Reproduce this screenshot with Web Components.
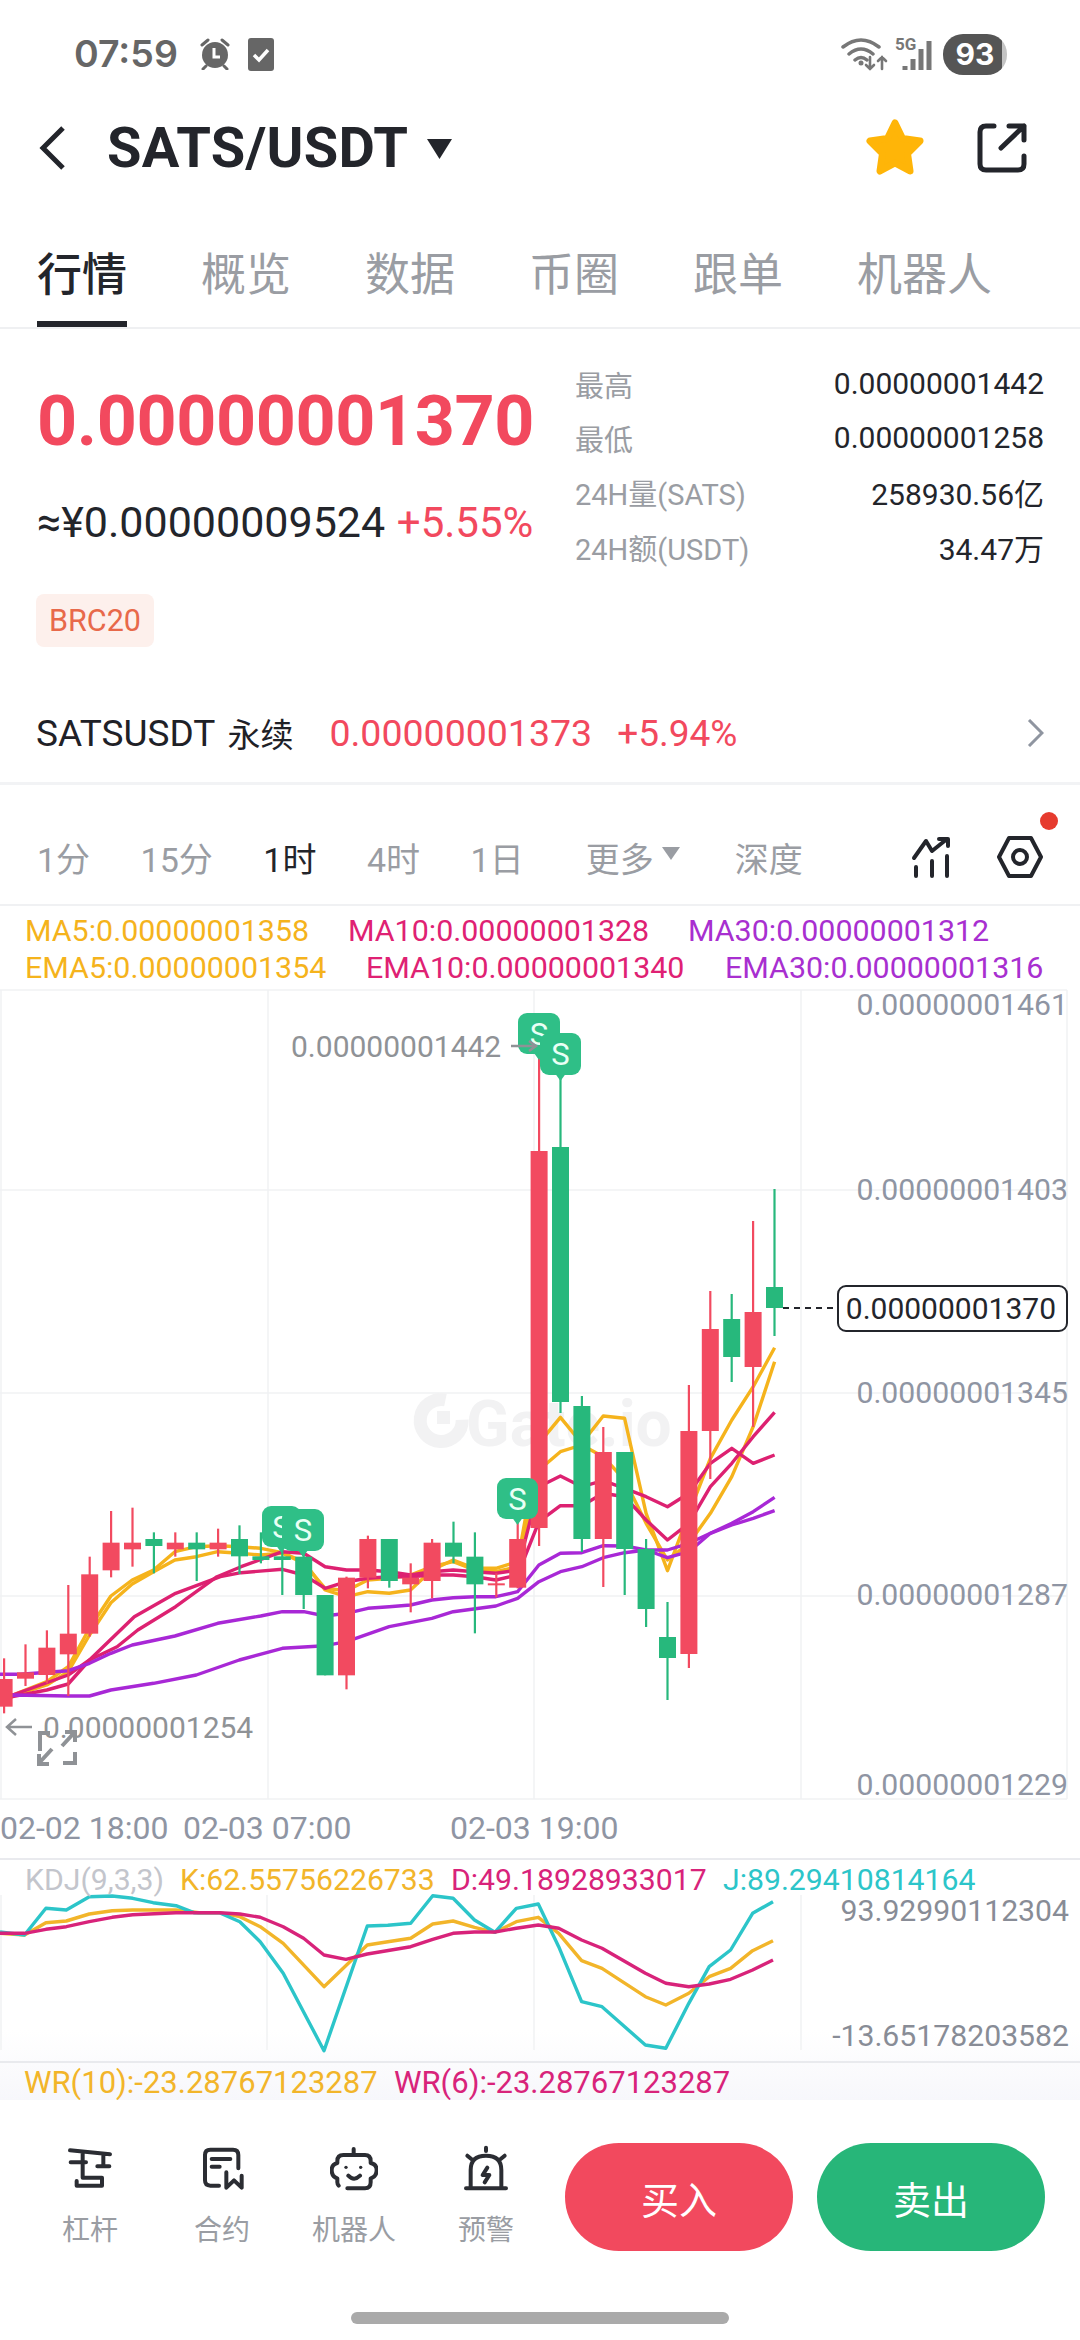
<!DOCTYPE html>
<html lang="zh">
<head>
<meta charset="utf-8">
<title>SATS/USDT</title>
<style>
  html, body { margin: 0; padding: 0; background: #fff; }
  body {
    width: 1080px; height: 2340px; overflow: hidden;
    font-family: Roboto, "Noto Sans CJK SC", sans-serif;
    color: #1f2127;
  }
</style>
</head>
<body>
  <status-bar></status-bar>
  <pair-header>SATS/USDT</pair-header>
  <market-tabs>
    <market-tab active>行情</market-tab>
    <market-tab>概览</market-tab>
    <market-tab>数据</market-tab>
    <market-tab>币圈</market-tab>
    <market-tab>跟单</market-tab>
    <market-tab>机器人</market-tab>
  </market-tabs>
  <price-panel>
    <stat-row label="最高">0.00000001442</stat-row>
    <stat-row label="最低">0.00000001258</stat-row>
    <stat-row label="24H量(SATS)">258930.56亿</stat-row>
    <stat-row label="24H额(USDT)">34.47万</stat-row>
  </price-panel>
  <period-bar></period-bar>
  <ma-legend></ma-legend>
  <kline-chart></kline-chart>
  <kdj-panel></kdj-panel>
  <action-bar>
    <action-item label="杠杆">
      <svg viewBox="48 30 144 144" width="48" height="48" fill="none" stroke="#2b2d33" stroke-width="12" stroke-linecap="round" stroke-linejoin="round"><path d="M60 46 180 58M98 50V128H156V152H80V138M62 82H108M160 56V94M142 94H178"/></svg>
    </action-item>
    <action-item label="合约">
      <svg viewBox="441 30 144 144" width="48" height="48" fill="none" stroke="#2b2d33" stroke-width="12" stroke-linecap="round" stroke-linejoin="round"><path d="M504 152H478Q462 152 462 136V60Q462 44 478 44H546Q562 44 562 60V100M482 72H538M482 95H506M526 112V158L549 136 572 158V122"/></svg>
    </action-item>
    <action-item label="机器人">
      <svg viewBox="840 30 144 144" width="48" height="48" fill="none" stroke="#2b2d33" stroke-width="12" stroke-linecap="round" stroke-linejoin="round"><path d="M911 42V58M892 160H945Q962 160 962 142V130Q980 125 980 105 980 88 962 84V78Q962 60 945 60H880Q862 60 862 78V84Q845 88 845 105 845 125 862 130V142Q862 148 866 152M895 122Q912 140 930 122"/><circle cx="888" cy="97" r="5" fill="#2b2d33" stroke="none"/><circle cx="932" cy="97" r="5" fill="#2b2d33" stroke="none"/></svg>
    </action-item>
    <action-item label="预警">
      <svg viewBox="1236 30 144 144" width="48" height="48" fill="none" stroke="#2b2d33" stroke-width="12" stroke-linecap="round" stroke-linejoin="round"><path d="M1262 158V105Q1262 62 1308 62 1354 62 1354 105V158M1248 160H1368M1308 38V48M1252 62 1264 72M1364 62 1352 72M1312 98 1298 120H1318L1304 142"/></svg>
    </action-item>
    <trade-button slot="trade" color="#f2495e">买入</trade-button>
    <trade-button slot="trade" color="#27b679">卖出</trade-button>
  </action-bar>
  <home-indicator></home-indicator>

<script>
/****************************
 * Small helper for the shadow roots
 ****************************/
class ShadowBase extends HTMLElement {
  constructor(html) {
    super();
    this.attachShadow({ mode: 'open' });
    this.shadowRoot.innerHTML = html;
  }
}

class StatusBar extends ShadowBase {
  constructor() {
    super(`
      <style>
        :host { display: flex; align-items: center; height: 108px; padding: 0 73px 0 74px; box-sizing: border-box; color: #666; }
        .time { font: 600 37.500px/1 Inter, Roboto, sans-serif; }
        svg { display: block; }
        .alarm { margin-left: 22px; }
        .check { margin-left: 18px; }
        .fill { flex: 1; }
        .bat { display: flex; align-items: center; justify-content: center; margin-left: 10px; width: 64px; height: 41px; border-radius: 20px; color: #fff; font: 700 30px/1 Inter, Roboto, sans-serif; background: linear-gradient(90deg, #555 92%, #c4c4c4 92%); }
      </style>
      <span class="time">07:59</span>
      <svg class="alarm" width="30" height="32" viewBox="0 0 30 32">
        <circle cx="15" cy="17" r="13" fill="#666"/>
        <path d="M2 7 8 2M28 7 22 2M6 28 3 31M24 28 27 31" stroke="#666" stroke-width="3" stroke-linecap="round"/>
        <path d="M14 10V19H20" fill="none" stroke="#fff" stroke-width="3"/>
      </svg>
      <svg class="check" width="26" height="33" viewBox="0 0 26 33">
        <rect width="26" height="33" rx="3" fill="#666"/>
        <path d="M6 17 11 22 20 12" fill="none" stroke="#fff" stroke-width="3.5"/>
      </svg>
      <span class="fill"></span>
      <svg width="92" height="52" viewBox="0 -8 92 52">
        <g fill="none" stroke="#777" stroke-width="3.500" stroke-linecap="round">
          <path d="M2 11Q20 -3 38 11M8 18Q20 8 32 18M14 24Q20 19 26 24"/>
          <path d="M29 21V33M25 29 29 33 33 29M41 33V21M37 25 41 21 45 25" stroke-width="2.600"/>
          <path d="M64 34V30M72 34V23M80 34V13M88 34V5" stroke-width="5" stroke-linecap="butt"/>
        </g>
        <circle cx="20" cy="27" r="2.500" fill="#777"/>
        <text x="54" y="14" font-family="Roboto" font-weight="700" font-size="17" fill="#777">5G</text>
      </svg>
      <span class="bat">93</span>
    `);
  }
}
customElements.define('status-bar', StatusBar);

class PairHeader extends ShadowBase {
  constructor() {
    super(`
      <style>
        :host { display: flex; align-items: center; height: 80px; padding: 0 53px 0 39px; box-sizing: border-box; }
        .name { font-size: 56px; font-weight: 700; margin-left: 41px; color: #23252b; letter-spacing: .25px; }
        .caret { margin-left: 19px; margin-top: 2px; }
        .fill { flex: 1; }
        svg { display: block; }
        .share { margin-left: 52px; }
      </style>
      <svg width="27" height="44" viewBox="0 0 27 44"><path d="M24 2 4 22 24 42" fill="none" stroke="#23252b" stroke-width="5"/></svg>
      <span class="name"><slot></slot></span>
      <svg class="caret" width="25" height="20" viewBox="0 0 25 20"><path d="M0 0H25L12.500 20Z" fill="#23252b"/></svg>
      <span class="fill"></span>
      <svg width="60" height="58" viewBox="0 0 60 58"><path d="M30 4 37.500 19.500 55 22 42.500 34.500 45 52 30 44 15 52 17.500 34.500 5 22 22.500 19.500Z" fill="#ffb508" stroke="#ffb508" stroke-width="7" stroke-linejoin="round"/></svg>
      <svg class="share" width="50" height="50" viewBox="0 0 50 50" fill="none" stroke="#23252b" stroke-width="5" stroke-linecap="round" stroke-linejoin="round">
        <path d="M17 3H9Q3 3 3 9V41Q3 47 9 47H41Q47 47 47 41V33"/>
        <path d="M24 25 47 3M32 3H47V17"/>
      </svg>
    `);
  }
}
customElements.define('pair-header', PairHeader);

class MarketTabs extends ShadowBase {
  constructor() {
    super(`
      <style>
        :host { display: flex; gap: 74px; height: 141px; padding-left: 37px; box-sizing: border-box; border-bottom: 2px solid #eff0f2; }
      </style>
      <slot></slot>
    `);
  }
}
customElements.define('market-tabs', MarketTabs);

class MarketTab extends ShadowBase {
  constructor() {
    super(`
      <style>
        :host { display: block; height: 139px; padding-top: 59px; box-sizing: border-box; font-size: 45px; line-height: 58px; color: #9a9da3; white-space: nowrap; position: relative; }
        :host([active]) { color: #23252b; font-weight: 500; }
        :host([active]) i { position: absolute; left: 0; right: 0; bottom: 0; height: 6px; background: #23252b; }
      </style>
      <slot></slot><i></i>
    `);
  }
}
customElements.define('market-tab', MarketTab);

class StatRow extends ShadowBase {
  constructor() {
    super(`
      <style>
        :host { display: flex; justify-content: space-between; align-items: center; height: 54.300px; font-size: 30px; color: #23252b; }
        .l { font-size: 29px; color: #9a9da3; }
      </style>
      <span class="l"></span><span><slot></slot></span>
    `);
  }
  connectedCallback() {
    this.shadowRoot.querySelector('.l').textContent = this.getAttribute('label');
  }
}
customElements.define('stat-row', StatRow);

class PricePanel extends ShadowBase {
  constructor() {
    super(`
      <style>
        :host { display: block; height: 456px; box-sizing: border-box; border-bottom: 3px solid #f2f3f5; padding-left: 36px; padding-right: 36px; }
        .top { display: grid; grid-template-columns: 539px 469px; height: 374px; }
        .big { margin: 52px 0 0 1px; font-size: 70px; line-height: 80px; font-weight: 700; color: #f2495e; letter-spacing: -.4px; white-space: nowrap; }
        .sub { margin: 31px 0 0 1px; font-size: 43px; line-height: 60px; font-weight: 400; color: #23252b; white-space: nowrap; }
        .sub b { font-weight: 400; font-size: 42px; color: #f2495e; margin-left: 1px; }
        .tag { display: inline-block; margin-top: 41px; padding: 0 13px; height: 53px; line-height: 53px; font-size: 30.500px; color: #e8694a; background: #fdf0ec; border-radius: 8px; }
        .stats { padding-top: 27.500px; }
        .perp { display: flex; align-items: center; height: 60px; font-size: 37px; }
        .perp .cn { font-size: 33px; margin-left: 12px; }
        .perp .p { color: #f2495e; margin-left: 36px; font-size: 37.500px; }
        .perp .c { color: #f2495e; margin-left: 25px; font-size: 37px; font-weight: 400; }
        .perp svg { margin-left: auto; }
      </style>
      <div class="top">
        <div>
          <div class="big">0.00000001370</div>
          <div class="sub">≈¥0.00000009524 <b>+5.55%</b></div>
          <span class="tag">BRC20</span>
        </div>
        <div class="stats"><slot></slot></div>
      </div>
      <div class="perp">
        <span>SATSUSDT</span><span class="cn">永续</span><span class="p">0.00000001373</span><span class="c">+5.94%</span>
        <svg width="17" height="28" viewBox="0 0 17 28"><path d="M2 1 15 14 2 27" fill="none" stroke="#8f95a0" stroke-width="3"/></svg>
      </div>
    `);
  }
}
customElements.define('price-panel', PricePanel);

class PeriodBar extends ShadowBase {
  constructor() {
    super(`
      <style>
        :host { display: flex; align-items: center; height: 121px; padding: 25px 37px 0 37px; box-sizing: border-box; border-bottom: 2px solid #f0f1f3; font-size: 34px; color: #9a9da3; white-space: nowrap; position: relative; }
        span { margin-right: 50.500px; }
        .on { color: #23252b; }
        .more { display: flex; align-items: center; margin: 0 55px 0 11.500px; }
        .more svg { margin-left: 8px; margin-top: -8px; }
        .depth { margin-right: 0; }
        .fill { flex: 1; margin: 0; }
        .hex { margin-left: 44px; }
        .dot { position: absolute; left: 1040px; top: 27px; width: 18px; height: 18px; border-radius: 50%; background: #e63b2e; }
        svg { display: block; }
      </style>
      <span>1分</span><span>15分</span><span class="on">1时</span><span>4时</span><span>1日</span>
      <div class="more">更多<svg width="18" height="13" viewBox="0 0 18 13"><path d="M0 0H18L9 13Z" fill="#9a9da3"/></svg></div>
      <span class="depth">深度</span>
      <span class="fill"></span>
      <svg width="42" height="42" viewBox="0 0 42 42" fill="none" stroke="#23252b" stroke-width="4" stroke-linecap="round" stroke-linejoin="round">
        <path d="M3 22 15 5 21 15 36 3M28 3H37V10"/>
        <path d="M5 31V40M21 25V40M36 20V40"/>
      </svg>
      <svg class="hex" width="46" height="42" viewBox="0 0 46 42" fill="none" stroke="#23252b" stroke-width="4" stroke-linejoin="round">
        <path d="M12 2H34L44 21 34 40H12L2 21Z"/><circle cx="23" cy="21" r="7"/>
      </svg>
      <i class="dot"></i>
    `);
  }
}
customElements.define('period-bar', PeriodBar);

class MaLegend extends ShadowBase {
  constructor() {
    super(`
      <style>
        :host { display: block; height: 82px; padding: 6px 0 0 25px; box-sizing: border-box; font-size: 30.400px; line-height: 37px; white-space: nowrap; }
        div { display: grid; }
        .a { grid-template-columns: 323px 340px auto; }
        .b { grid-template-columns: 341px 359px auto; }
        .y { color: #f5b31c; } .p { color: #df2173; } .v { color: #a82fd0; }
      </style>
      <div class="a"><span class="y">MA5:0.00000001358</span><span class="p">MA10:0.00000001328</span><span class="v">MA30:0.00000001312</span></div>
      <div class="b"><span class="y">EMA5:0.00000001354</span><span class="p">EMA10:0.00000001340</span><span class="v">EMA30:0.00000001316</span></div>
    `);
  }
}
customElements.define('ma-legend', MaLegend);

// turning the points read off the picture into page coords
const leftPts = a => a.map(([x, y]) => [x * 540 / 1568, 1380 + y / 3]);
const rightPts = a => a.map(([x, y]) => [480 + x * 600 / 1568, 1380 + y / 3]);
const polyline = (pts, color, w = 3.4) =>
  `<polyline points="${pts.map(p => p[0].toFixed(1) + ',' + p[1].toFixed(1)).join(' ')}" fill="none" stroke="${color}" stroke-width="${w}" stroke-linejoin="round"/>`;

const RED = '#f24a60', GREEN = '#27b87c', YEL = '#f5b31c', PINK = '#dd2171', PUR = '#a828d6';

// wick top, wick bottom, body top, body bottom, colour (page y)
const z = v => 1380 + v / 3;
const CANDLES = [
  [z(835), z(1000), z(897), z(980), RED], [z(793), z(918), z(877), z(896), RED],
  [z(751), z(910), z(803), z(885), RED], [z(615), z(948), z(761), z(823), RED],
  [z(530), z(770), z(583), z(761), RED], [z(393), z(592), z(488), z(571), RED],
  [z(383), z(560), z(488), z(508), RED], [z(457), z(580), z(477), z(498), GREEN],
  [z(457), z(530), z(488), z(508), RED], [z(457), z(603), z(488), z(508), GREEN],
  [z(446), z(530), z(488), z(508), RED], [z(436), z(582), z(477), z(529), GREEN],
  [z(457), z(550), z(529), z(540), GREEN], [z(510), z(645), z(529), z(540), GREEN],
  [z(510), z(687), z(530), z(645), GREEN], [z(645), z(886), z(645), z(886), GREEN],
  [z(590), z(928), z(593), z(886), RED], [z(467), z(625), z(477), z(593), RED],
  [z(477), z(623), z(477), z(603), GREEN], [z(550), z(697), z(593), z(613), RED],
  [z(477), z(655), z(488), z(603), RED], [z(425), z(550), z(488), z(530), GREEN],
  [z(457), z(760), z(530), z(613), GREEN], [z(580), z(652), z(610), z(616), RED],
  [z(420), z(625), z(477), z(623), RED],
  [1058, 1546, 1151, 1528, RED], [1077, 1413, 1147, 1402, GREEN],
  [1396, 1552, 1406, 1539, GREEN], [1427, 1587, 1452, 1539, RED],
  [1452, 1595, 1452, 1549, GREEN], [1539, 1627, 1549, 1609, GREEN],
  [1602, 1700, 1637, 1658, GREEN], [1385, 1668, 1431, 1654, RED],
  [1291, 1479, 1329, 1431, RED], [1294, 1382, 1319, 1357, GREEN],
  [1221, 1427, 1312, 1367, RED], [1189, 1336, 1287, 1308, GREEN],
];

const LINES = [
  [YEL, leftPts([[12,950],[37,945],[136,905],[198,860],[260,745],[322,648],[384,600],[446,570],[508,515],[570,500],[632,497],[695,500],[757,505],[820,518],[882,545],[944,630],[1006,650],[1068,635],[1130,640],[1192,630],[1254,570],[1316,540],[1378,565],[1440,565],[1503,545]])
    .concat(rightPts([[154,190],[210,112],[266,190],[322,108],[378,115],[434,400],[490,572],[546,400],[602,235],[658,120],[714,20],[770,-97]]))],
  [YEL, leftPts([[12,950],[37,948],[136,915],[198,875],[260,765],[322,668],[384,612],[446,575],[508,540],[570,530],[632,515],[695,520],[757,525],[820,520],[882,550],[944,625],[1006,632],[1068,600],[1130,595],[1192,585],[1254,560],[1316,545],[1378,570],[1440,575],[1503,560]])
    .concat(rightPts([[154,270],[210,215],[266,195],[322,230],[378,300],[434,430],[490,540],[546,490],[602,400],[658,290],[714,140],[770,-55]]))],
  [PINK, leftPts([[12,950],[37,945],[198,885],[260,840],[390,710],[510,640],[640,590],[700,578],[820,568],[882,585],[944,625],[1006,605],[1068,595],[1130,590],[1192,590],[1254,585],[1316,585],[1378,590],[1440,600],[1503,585]])
    .concat(rightPts([[154,425],[210,377],[266,377],[322,340],[378,350],[434,420],[490,480],[546,430],[602,320],[658,250],[714,170],[770,97]]))],
  [PINK, leftPts([[12,950],[37,950],[136,930],[198,912],[260,840],[340,800],[400,750],[510,680],[630,590],[700,560],[820,515],[882,520],[944,560],[1006,570],[1068,570],[1130,575],[1192,585],[1254,575],[1316,570],[1378,575],[1440,580],[1503,570]])
    .concat(rightPts([[154,320],[210,288],[266,320],[322,302],[378,325],[434,350],[490,380],[546,340],[602,250],[658,205],[714,250],[770,225]]))],
  [PUR, leftPts([[0,883],[60,883],[198,872],[260,850],[322,820],[384,795],[508,768],[632,730],[757,708],[820,695],[882,695],[944,708],[1006,700],[1068,685],[1130,680],[1192,675],[1254,660],[1316,653],[1378,650],[1440,650],[1503,635]])
    .concat(rightPts([[154,555],[210,520],[266,518],[322,497],[378,498],[434,510],[490,510],[546,490],[602,460],[658,430],[714,395],[770,352]]))],
  [PUR, leftPts([[12,947],[37,945],[198,948],[260,948],[322,930],[446,910],[570,885],[695,840],[820,805],[944,797],[1006,785],[1130,740],[1254,715],[1316,695],[1440,678],[1503,655]])
    .concat(rightPts([[154,605],[210,575],[266,560],[322,533],[378,518],[434,510],[490,533],[546,515],[602,460],[658,435],[714,415],[770,392]]))],
];

const sMark = (x, y, w, h) => `
  <path d="M${x + w / 2 - 5} ${y + h - 1}L${x + w / 2} ${y + h + 6}L${x + w / 2 + 5} ${y + h - 1}Z" fill="#2fbf87"/>
  <rect x="${x}" y="${y}" width="${w}" height="${h}" rx="9" fill="#2fbf87"/>
  <text x="${x + w / 2}" y="${y + h / 2 + 11}" text-anchor="middle" font-size="31" fill="#e9fff5">S</text>`;

class KlineChart extends ShadowBase {
  constructor() {
    const axis = [[1004, '0.00000001461'], [1189, '0.00000001403'], [1392, '0.00000001345'], [1594, '0.00000001287'], [1784, '0.00000001229']];
    const candles = CANDLES.map((c, i) => {
      const x = 4.1 + 21.4 * i;
      return `<path d="M${x} ${c[0]}V${c[1]}" stroke="${c[4]}" stroke-width="2.2"/>` +
        `<rect x="${x - 8.500}" y="${c[2]}" width="17" height="${c[3] - c[2]}" fill="${c[4]}"/>`;
    }).join('');
    super(`
      <style>
        :host { display: block; height: 870px; }
        svg { display: block; font-family: Roboto, sans-serif; }
      </style>
      <svg width="1080" height="870" viewBox="0 988 1080 870">
        <path d="M0 990H1067M0 1190H1067M0 1393H1067M0 1596H1067M0 1799H1067M1 990V1799M268 990V1799M534 990V1799M801 990V1799M1067 990V1799" stroke="#f1f2f4" stroke-width="1.500" fill="none"/>
        <g fill="#f2f2f3">
          <path d="M459 1411A21 21 0 1 0 459 1437" fill="none" stroke="#f2f2f3" stroke-width="13" transform="rotate(-40 437 1424)"/>
          <rect x="437" y="1411" width="13" height="13"/>
          <text x="466" y="1446" font-size="64" font-weight="700">Gate.io</text>
        </g>
        ${LINES.map(l => polyline(l[1], l[0])).join('')}
        ${candles}
        ${sMark(518, 1013, 42, 41)}${sMark(540, 1033, 41, 42)}
        ${sMark(262, 1506, 39, 41)}${sMark(282, 1509, 42, 42)}${sMark(497, 1478, 41, 41)}
        <text x="291" y="1057" font-size="30" fill="#8f9296">0.00000001442</text>
        <path d="M511 1046H535M529 1041 536 1046 529 1051" stroke="#8f9296" stroke-width="2.500" fill="none"/>
        <text x="43" y="1738" font-size="30" fill="#8f9296">0.00000001254</text>
        <path d="M32 1727H7M16 1719 7 1727 16 1735" stroke="#8f9296" stroke-width="2.500" fill="none"/>
        <path d="M40 1751V1733H50M62 1746 74 1733M65 1732H75V1742M40 1762 52 1749M39 1754V1764H49M75 1752V1763H63" stroke="#8f9296" stroke-width="4" fill="none"/>
        ${axis.map(a => `<text x="1068" y="${a[0] + 11}" text-anchor="end" font-size="30.200" fill="#8f95a3">${a[1]}</text>`).join('')}
        <path d="M783 1308H837" stroke="#23252b" stroke-width="2" stroke-dasharray="6 5"/>
        <rect x="838" y="1286" width="229" height="45" rx="8" fill="#fff" stroke="#23252b" stroke-width="2"/>
        <text x="1056" y="1319" text-anchor="end" font-size="30" fill="#23252b">0.00000001370</text>
        <text x="0" y="1839" font-size="32" fill="#8f95a3">02-02 18:00</text>
        <text x="183" y="1839" font-size="32" fill="#8f95a3">02-03 07:00</text>
        <text x="450" y="1839" font-size="32" fill="#8f95a3">02-03 19:00</text>
      </svg>
    `);
  }
}
customElements.define('kline-chart', KlineChart);

const kdjPts = a => a.map(([x, y]) => [x * 800 / 1568, 1840 + y / 3]);

class KdjPanel extends ShadowBase {
  constructor() {
    const K = [[0,280],[48,285],[90,248],[130,243],[175,222],[220,212],[260,210],[345,210],[390,218],[430,218],[470,230],[510,260],[555,310],[635,440],[720,315],[760,305],[805,295],[848,252],[888,243],[930,262],[970,277],[1012,245],[1055,232],[1095,280],[1140,362],[1180,385],[1265,470],[1305,495],[1350,460],[1390,410],[1432,385],[1475,332],[1515,302]];
    const D = [[0,280],[48,280],[90,268],[130,260],[175,245],[220,232],[260,224],[345,218],[430,218],[470,222],[510,232],[555,260],[595,295],[635,345],[678,358],[720,342],[805,320],[848,298],[888,280],[930,276],[970,276],[1012,265],[1055,255],[1095,265],[1140,300],[1180,325],[1265,400],[1305,430],[1350,440],[1390,432],[1432,418],[1475,390],[1515,360]];
    const J = [[0,276],[48,285],[90,205],[130,210],[175,170],[220,168],[260,175],[300,188],[345,197],[380,218],[430,218],[470,245],[510,305],[555,400],[635,632],[720,258],[760,256],[805,250],[848,167],[888,175],[930,240],[970,277],[1012,205],[1055,192],[1095,320],[1140,485],[1180,500],[1265,615],[1305,625],[1350,490],[1390,380],[1432,330],[1475,220],[1515,185]];
    super(`
      <style>
        :host { display: block; height: 242px; }
        svg { display: block; font-family: Roboto, sans-serif; }
      </style>
      <svg width="1080" height="242" viewBox="0 1858 1080 242">
        <defs><linearGradient id="fade" x1="0" y1="0" x2="0" y2="1"><stop offset="0" stop-color="#fff"/><stop offset="1" stop-color="#f7f7fb"/></linearGradient></defs>
        <rect x="0" y="2030" width="1080" height="70" fill="url(#fade)"/>
        <path d="M0 1859H1080M0 2062H1080" stroke="#e9eaee" stroke-width="2"/>
        <path d="M1 1895V2050M267 1895V2050M534 1895V2050M801 1895V2050" stroke="#f1f2f4" stroke-width="1.500"/>
        ${polyline(kdjPts(K), '#f2b52a')}
        ${polyline(kdjPts(J), '#2cc5c9')}
        ${polyline(kdjPts(D), '#d8237a')}
        <text x="25" y="1890" font-size="30.200" fill="#c3c5cc">KDJ(9,3,3)</text>
        <text x="180" y="1890" font-size="30.200" fill="#f2b52a">K:62.55756226733</text>
        <text x="451" y="1890" font-size="30.200" fill="#d8237a">D:49.18928933017</text>
        <text x="723" y="1890" font-size="30.200" fill="#2cc5c9">J:89.29410814164</text>
        <text x="1069" y="1921" text-anchor="end" font-size="30.200" fill="#888c96">93.92990112304</text>
        <text x="1069" y="2046" text-anchor="end" font-size="30.200" fill="#888c96">-13.65178203582</text>
        <text x="24" y="2093" font-size="31" fill="#f2b52a">WR(10):-23.28767123287</text>
        <text x="394" y="2093" font-size="31" fill="#d8237a">WR(6):-23.28767123287</text>
      </svg>
    `);
  }
}
customElements.define('kdj-panel', KdjPanel);

class ActionItem extends ShadowBase {
  constructor() {
    super(`
      <style>
        :host { display: flex; flex-direction: column; align-items: center; width: 132px; font-size: 28px; color: #9a9da3; }
        .ic { height: 48px; }
        .l { margin-top: 18px; line-height: 40px; white-space: nowrap; }
      </style>
      <div class="ic"><slot></slot></div>
      <div class="l"></div>
    `);
  }
  connectedCallback() {
    this.shadowRoot.querySelector('.l').textContent = this.getAttribute('label');
  }
}
customElements.define('action-item', ActionItem);

class TradeButton extends ShadowBase {
  constructor() {
    super(`
      <style>
        :host { display: flex; align-items: center; justify-content: center; width: 228px; height: 108px; border-radius: 54px; color: #fff; font-size: 38px; }
      </style>
      <slot></slot>
    `);
  }
  connectedCallback() {
    this.style.background = this.getAttribute('color');
  }
}
customElements.define('trade-button', TradeButton);

class ActionBar extends ShadowBase {
  constructor() {
    super(`
      <style>
        :host { display: flex; height: 210px; padding: 43px 0 0 24px; box-sizing: border-box; background: #fff; }
        .items { display: flex; width: 541px; padding-top: 2px; align-items: flex-start; }
        .trade { display: flex; gap: 24px; align-items: flex-start; }
      </style>
      <div class="items"><slot></slot></div>
      <div class="trade"><slot name="trade"></slot></div>
    `);
  }
}
customElements.define('action-bar', ActionBar);

class HomeIndicator extends ShadowBase {
  constructor() {
    super(`
      <style>
        :host { display: block; height: 30px; }
        i { display: block; width: 378px; height: 12px; margin: 2px auto 0; border-radius: 6px; background: #aaa; }
      </style>
      <i></i>
    `);
  }
}
customElements.define('home-indicator', HomeIndicator);
</script>
</body>
</html>
